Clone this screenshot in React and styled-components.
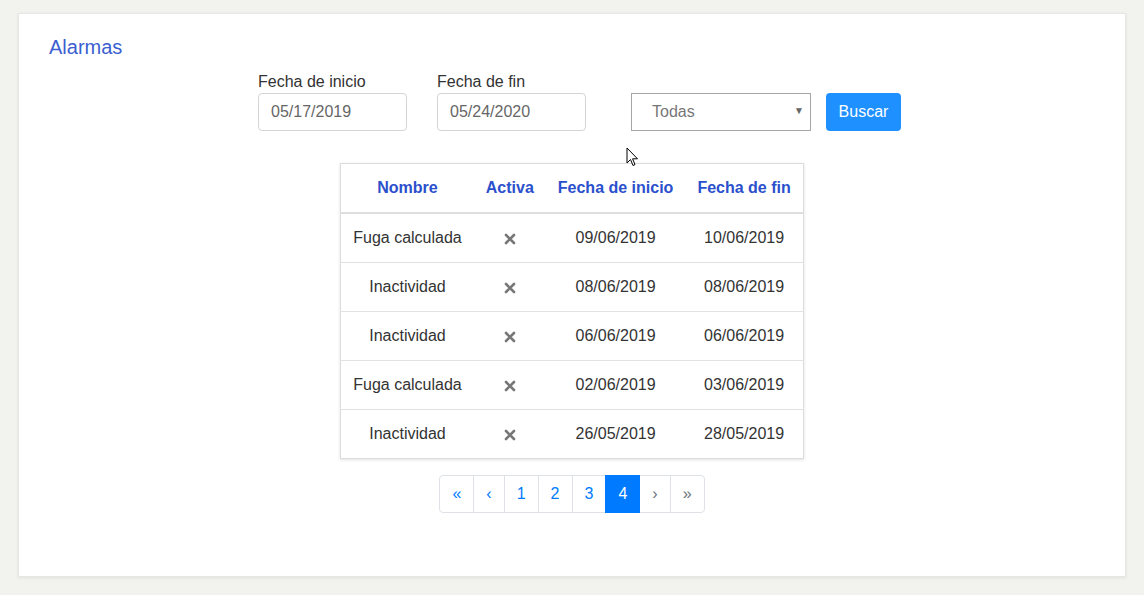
import React from 'react';
import styled, { createGlobalStyle } from 'styled-components';

const GlobalStyle = createGlobalStyle`
  body {
    margin: 0;
    background: #f2f2ee;
    font-family: "Liberation Sans", Arial, sans-serif;
    color: #333;
  }
`;

const Page = styled.div`
  padding: 13px 18px 18px;
`;

const Card = styled.div`
  position: relative;
  background: #fff;
  border: 1px solid #e6e6e2;
  box-shadow: 0 1px 3px rgba(0, 0, 0, 0.08);
  padding: 21px 30px 63px;
  box-sizing: border-box;
  height: 564px;
`;

const Title = styled.h1`
  margin: 0;
  font-size: 20px;
  line-height: 24px;
  font-weight: normal;
  color: #3b5fd0;
`;

const FormRow = styled.div`
  display: flex;
  align-items: flex-end;
  justify-content: center;
  padding-left: 15px;
  margin-top: 13px;
`;

const Field = styled.div`
  display: flex;
  flex-direction: column;
  margin-right: ${props => props.$gap || 0}px;
`;

const Label = styled.label`
  font-size: 16px;
  line-height: 19px;
  margin-bottom: 2px;
  color: #333;
`;

const DateInput = styled.input`
  box-sizing: border-box;
  width: 149px;
  height: 38px;
  padding: 0 12px;
  border: 1px solid #d4d4d4;
  border-radius: 4px;
  font-family: inherit;
  font-size: 16px;
  color: #666;
  background: #fff;
  outline: none;
`;

const SelectBox = styled.div`
  position: relative;
  box-sizing: border-box;
  width: 180px;
  height: 38px;
  margin-right: 15px;
  border: 1px solid #a6a6a6;
  display: flex;
  align-items: center;
  padding-left: 20px;
  font-size: 16px;
  color: #777;
  background: #fff;
`;

const Caret = styled.span`
  position: absolute;
  right: 6px;
  top: 11px;
  font-size: 10px;
  color: #666;
`;

const SearchButton = styled.button`
  box-sizing: border-box;
  width: 75px;
  height: 38px;
  border: none;
  border-radius: 4px;
  background: #1e90ff;
  color: #fff;
  font-family: inherit;
  font-size: 16px;
  cursor: pointer;
`;

const TableWrap = styled.div`
  display: flex;
  justify-content: center;
  margin-top: 32px;
`;

const Table = styled.table`
  border-collapse: collapse;
  border: 1px solid #dcdcdc;
  box-shadow: 0 1px 3px rgba(0, 0, 0, 0.12);
  font-size: 16px;
  background: #fff;
`;

const Th = styled.th`
  padding: 14px 12px 14px;
  line-height: 20px;
  font-weight: bold;
  color: #2b50cc;
  text-align: center;
  border-bottom: 2px solid #dedede;
  white-space: nowrap;
`;

const Td = styled.td`
  padding: 14px 12px;
  line-height: 20px;
  text-align: center;
  color: #333;
  border-top: 1px solid #e2e2e2;
  white-space: nowrap;
`;

const Pagination = styled.ul`
  display: flex;
  justify-content: center;
  list-style: none;
  margin: 16px 0 0;
  padding: 0;
`;

const PageItem = styled.li`
  padding: 8px 12px;
  line-height: 20px;
  font-size: 16px;
  border: 1px solid #dee2e6;
  margin-left: -1px;
  color: ${props => (props.$active ? '#fff' : props.$disabled ? '#6c757d' : '#007bff')};
  background: ${props => (props.$active ? '#007bff' : '#fff')};
  border-color: ${props => (props.$active ? '#007bff' : '#dee2e6')};
  position: relative;
  z-index: ${props => (props.$active ? 1 : 0)};

  &:first-child {
    margin-left: 0;
    border-radius: 4px 0 0 4px;
  }

  &:last-child {
    border-radius: 0 4px 4px 0;
  }
`;

const Cursor = styled.svg`
  position: absolute;
  left: 607px;
  top: 133px;
`;

const CrossIcon = () => (
  <svg width="12" height="12" viewBox="0 0 12 12" style={{ verticalAlign: 'middle' }}>
    <path d="M2 2 L10 10 M10 2 L2 10" stroke="#777" strokeWidth="2.6" strokeLinecap="round" />
  </svg>
);

const rows = [
  { name: 'Fuga calculada', start: '09/06/2019', end: '10/06/2019' },
  { name: 'Inactividad', start: '08/06/2019', end: '08/06/2019' },
  { name: 'Inactividad', start: '06/06/2019', end: '06/06/2019' },
  { name: 'Fuga calculada', start: '02/06/2019', end: '03/06/2019' },
  { name: 'Inactividad', start: '26/05/2019', end: '28/05/2019' },
];

const pages = [
  { label: '«' },
  { label: '‹' },
  { label: '1' },
  { label: '2' },
  { label: '3' },
  { label: '4', active: true },
  { label: '›', disabled: true },
  { label: '»', disabled: true },
];

export default function App() {
  return (
    <>
      <GlobalStyle />
      <Page>
        <Card>
          <Title>Alarmas</Title>
          <FormRow>
            <Field $gap={30}>
              <Label>Fecha de inicio</Label>
              <DateInput defaultValue="05/17/2019" />
            </Field>
            <Field $gap={45}>
              <Label>Fecha de fin</Label>
              <DateInput defaultValue="05/24/2020" />
            </Field>
            <SelectBox>
              Todas
              <Caret>▼</Caret>
            </SelectBox>
            <SearchButton>Buscar</SearchButton>
          </FormRow>

          <TableWrap>
            <Table>
              <thead>
                <tr>
                  <Th>Nombre</Th>
                  <Th>Activa</Th>
                  <Th>Fecha de inicio</Th>
                  <Th>Fecha de fin</Th>
                </tr>
              </thead>
              <tbody>
                {rows.map((r, i) => (
                  <tr key={i}>
                    <Td>{r.name}</Td>
                    <Td><CrossIcon /></Td>
                    <Td>{r.start}</Td>
                    <Td>{r.end}</Td>
                  </tr>
                ))}
              </tbody>
            </Table>
          </TableWrap>

          <Pagination>
            {pages.map((p, i) => (
              <PageItem key={i} $active={p.active} $disabled={p.disabled}>
                {p.label}
              </PageItem>
            ))}
          </Pagination>

          <Cursor width="14" height="22" viewBox="0 0 14 22">
            <path d="M1 1 L1 16 L4.5 12.5 L7 18.5 L9 17.6 L6.6 11.8 L11.5 11.8 Z" fill="#fff" stroke="#000" strokeWidth="1" strokeLinejoin="round" />
          </Cursor>
        </Card>
      </Page>
    </>
  );
}
